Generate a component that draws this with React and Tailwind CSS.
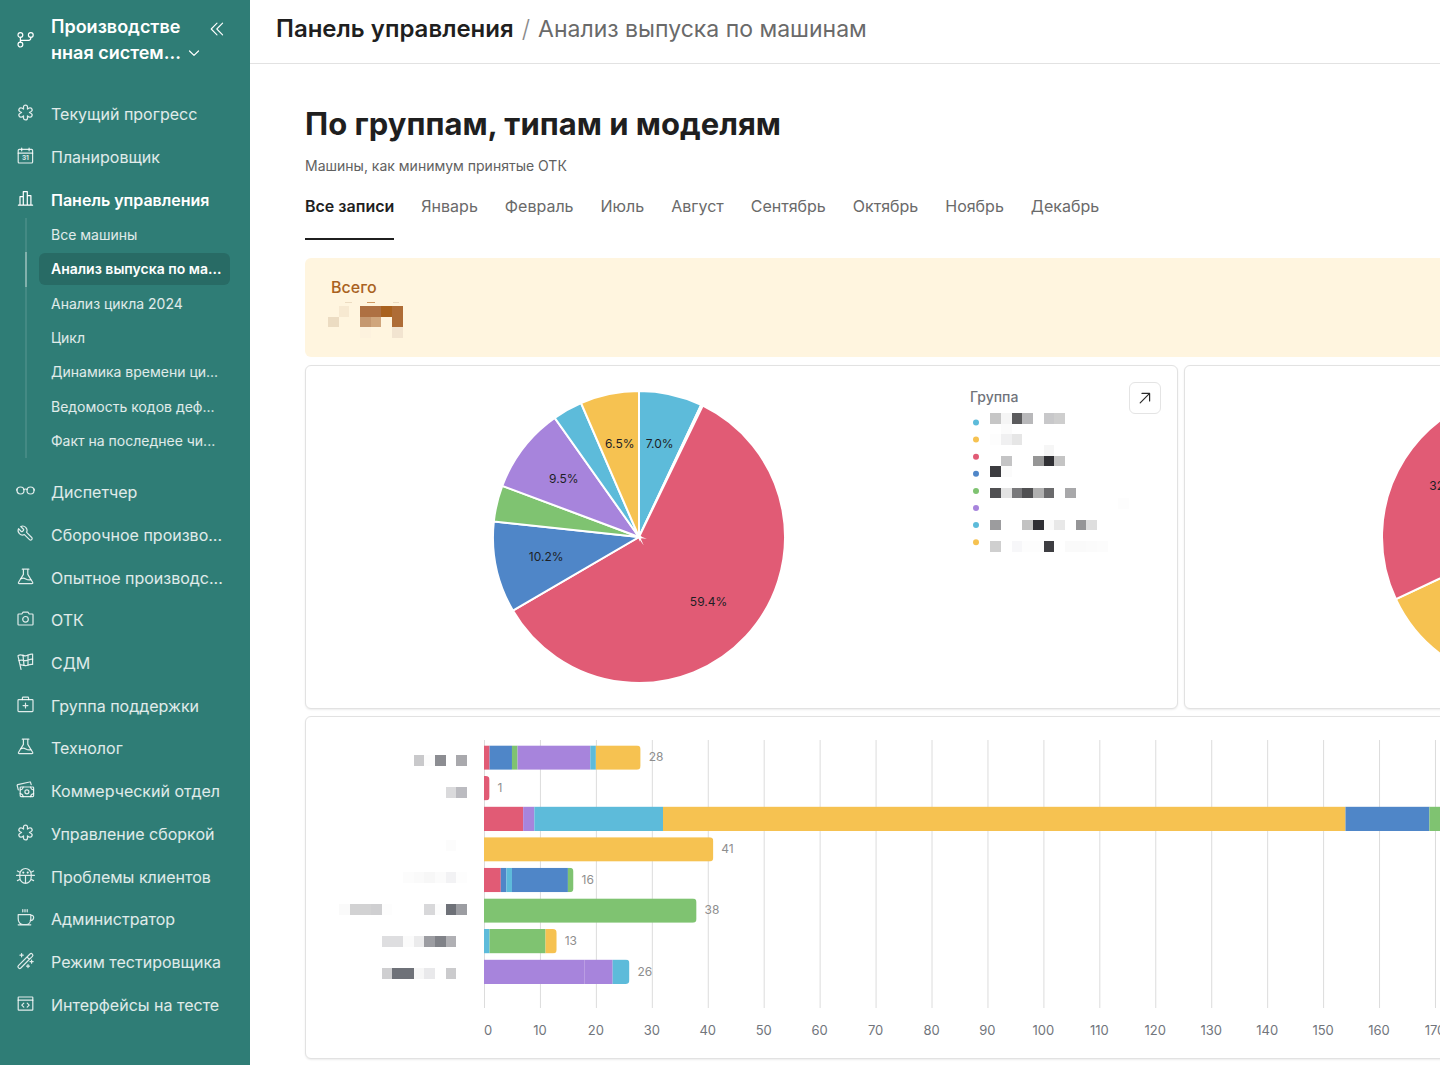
import React, { useState } from 'react';
import clsx from 'clsx';

const COLORS = {
  cyan: '#5dbbda',
  red: '#e15b75',
  blue: '#4f86c8',
  green: '#7fc371',
  purple: '#a784dc',
  yellow: '#f6c251',
};

// outline of a six-armed asterisk around (9.5, 9.5)
const asteriskPath = () => {
  const pt = (along, side, a) => {
    const x = 9.5 + along * Math.cos(a) - side * Math.sin(a);
    const y = 9.5 + along * Math.sin(a) + side * Math.cos(a);
    return `${x.toFixed(2)} ${y.toFixed(2)}`;
  };
  let d = '';
  for (let i = 0; i < 6; i++) {
    const a = -Math.PI / 2 + (i * Math.PI) / 3;
    d += `${i === 0 ? 'M' : 'L'}${pt(3.4, -1.95, a)}L${pt(5.4, -2, a)}A2 2 0 0 1 ${pt(5.4, 2, a)}L${pt(3.4, 1.95, a)}`;
  }
  return d + 'Z';
};

const FLASK = (
  <>
    <path d="M6.3 2.2h6.6M7.4 2.2v5.2L2.6 15.2q-.7 1.4.8 1.4h12.4q1.5 0 .8-1.4L11.8 7.4V2.2" />
    <path d="M5 11.6c2-1 3.4-.5 4.8.3s2.8 1.3 5 .7" />
  </>
);

const ICONS = {
  branch: (
    <>
      <circle cx="4.4" cy="5" r="2.4" />
      <circle cx="14.8" cy="5" r="2.4" />
      <circle cx="4.4" cy="14.6" r="2.4" />
      <path d="M4.4 7.4v4.8M4.4 10.3h8.2q2.2 0 2.2-2.2v-.7" />
    </>
  ),
  asterisk: <path d={asteriskPath()} />,
  calendar: (
    <>
      <rect x="2.2" y="3.4" width="14.4" height="13.6" rx="1" />
      <path d="M2.2 7.2h14.4M5.7 2v2.8M13.1 2v2.8" />
      <text x="9.4" y="14.4" textAnchor="middle" fontSize="6.5" fontWeight="700" fill="currentColor" stroke="none">31</text>
    </>
  ),
  bars: <path d="M2.4 16.2h14.2M4 16.2V7.6h3.3M7.3 16.2V2.6h4v13.6M11.3 6.6h3.6v9.6" />,
  glasses: (
    <>
      <circle cx="4.5" cy="9.5" r="3.5" />
      <circle cx="14.5" cy="9.5" r="3.5" />
      <path d="M7.8 8.6q1.7-1.2 3.4 0M.8 9.2v-1M18.2 9.2v-1" />
    </>
  ),
  wrench: (
    <path
      transform="matrix(-.74 0 0 .74 18.4 .6)"
      strokeWidth="1.6"
      d="M14.7 6.3a1 1 0 0 0 0 1.4l1.6 1.6a1 1 0 0 0 1.4 0l3.77-3.77a6 6 0 0 1-7.94 7.94l-6.91 6.91a2.12 2.12 0 0 1-3-3l6.91-6.91a6 6 0 0 1 7.94-7.94l-3.76 3.76z"
    />
  ),
  flask: FLASK,
  camera: (
    <>
      <path d="M2.8 5h3l1.3-1.9h4.8L13.2 5h3q.8 0 .8.8v9.4q0 .8-.8.8H2.8q-.8 0-.8-.8V5.8q0-.8.8-.8z" />
      <circle cx="9.5" cy="10.3" r="2.8" />
    </>
  ),
  flag: (
    <>
      <path d="M5 17.4 2 3.8c3-2.4 5 .4 7.6 0 2.6-.4 3.8-2 7-1.6v10.2c-2.8-.6-4.4.8-6.8 1.2-2.4.4-4-1.4-5.8-.6" />
      <path d="M3 8.6c2.8-1.6 4.8.4 7 0 2.6-.4 3.8-1.8 6.6-1.4M7 3.2l1 10.2M12 3v10.2" />
    </>
  ),
  aid: (
    <>
      <rect x="2" y="4.6" width="15" height="12" rx=".8" />
      <path d="M6.4 4.6V3q0-.8.8-.8h4.6q.8 0 .8.8v1.6M9.5 8.2v4.8M7.1 10.6h4.8" />
    </>
  ),
  money: (
    <>
      <rect x="4.2" y="7" width="13.4" height="9.6" rx=".8" />
      <circle cx="10.9" cy="11.8" r="2" />
      <path d="M4.2 10q2.6-.4 3-3M17.6 10q-2.6-.4-3-3M4.2 13.6q2.6.4 3 3M17.6 13.6q-2.6.4-3 3M2.3 9.8 1.2 5.6q-.2-.8.6-1L13.6 2q.8-.2 1 .6l.6 2" />
    </>
  ),
  bug: (
    <>
      <path d="M3.8 8.4a5.7 5.9 0 0 1 11.4 0v3.2a5.7 5.7 0 0 1-11.4 0zM.6 9.4h17.8M9.5 9.4v7.8M3.9 6.2 1.4 5M15.1 6.2l2.5-1.2M4.2 13.2l-2.8 1.4M14.8 13.2l2.8 1.4" />
      <circle cx="7.3" cy="6.6" r=".5" fill="currentColor" />
      <circle cx="11.7" cy="6.6" r=".5" fill="currentColor" />
    </>
  ),
  coffee: <path d="M2.2 6.6h12.6v4.2c0 3.4-2 5.8-4.6 5.8H6.8c-2.6 0-4.6-2.4-4.6-5.8zM14.8 7.2c4-.2 3.8 5.2-.6 5.4M2.2 16.8h12.6M6.8 1.6v2.2M9 1.6v2.2M11.2 1.6v2.2" />,
  wand: (
    <>
      <path d="M2.4 14.6 14 3a1.7 1.7 0 0 1 2.4 2.4L4.8 17a1.7 1.7 0 0 1-2.4-2.4zM11 6l2.4 2.4" />
      <path d="M5.6 2.6v3.2M4 4.2h3.2M15.6 9v3.2M14 10.6h3.2M12 13.6v3M10.5 15.1h3" />
    </>
  ),
  code: (
    <>
      <rect x="2.2" y="3" width="14.6" height="13.2" rx=".6" />
      <path d="M2.2 6.2h14.6M7.8 9.2l-2 2 2 2M11.2 9.2l2 2-2 2" />
    </>
  ),
};

function Icon({ name, className }) {
  return (
    <svg viewBox="0 0 19 19" fill="none" stroke="currentColor" strokeWidth="1.2" strokeLinecap="round" strokeLinejoin="round" className={clsx('size-[19px] shrink-0', className)} aria-hidden="true">
      {ICONS[name]}
    </svg>
  );
}

const MAIN_NAV = [
  { label: 'Текущий прогресс', icon: 'asterisk' },
  { label: 'Планировщик', icon: 'calendar' },
  { label: 'Панель управления', icon: 'bars', active: true },
];

const SUB_NAV = ['Все машины', 'Анализ выпуска по ма...', 'Анализ цикла 2024', 'Цикл', 'Динамика времени ци...', 'Ведомость кодов деф...', 'Факт на последнее чи...'];

const SECTION_NAV = [
  { label: 'Диспетчер', icon: 'glasses' },
  { label: 'Сборочное произво...', icon: 'wrench' },
  { label: 'Опытное производс...', icon: 'flask' },
  { label: 'ОТК', icon: 'camera' },
  { label: 'СДМ', icon: 'flag' },
  { label: 'Группа поддержки', icon: 'aid' },
  { label: 'Технолог', icon: 'flask' },
  { label: 'Коммерческий отдел', icon: 'money' },
  { label: 'Управление сборкой', icon: 'asterisk' },
  { label: 'Проблемы клиентов', icon: 'bug' },
  { label: 'Администратор', icon: 'coffee' },
  { label: 'Режим тестировщика', icon: 'wand' },
  { label: 'Интерфейсы на тесте', icon: 'code' },
];

const TABS = ['Все записи', 'Январь', 'Февраль', 'Июль', 'Август', 'Сентябрь', 'Октябрь', 'Ноябрь', 'Декабрь'];

// hidden values: [column, row, color]
const CELL = 32 / 3;

const TOTAL_CELLS = [
  [1, 0, '#f7e9d1'], [3, 0, '#ae7042'], [4, 0, '#ae7042'], [5, 0, '#a9621f'], [6, 0, '#ae6c36'],
  [0, 1, '#ecdcc2'], [3, 1, '#c59870'], [4, 1, '#d0a67c'], [6, 1, '#ae6c36'],
  [3, 2, '#fdf2de'], [6, 2, '#f2e4d0'],
];

const LEGEND_CELLS = [
  [0, 0, '#c6c6c6'], [1, 0, '#f5f5f5'], [2, 0, '#5b5b5d'], [3, 0, '#b8b8ba'], [5, 0, '#c8c8ca'], [6, 0, '#cecece'],
  [1, 1, '#fbfbfb'],
  [0, 2, '#fdfdfd'], [1, 2, '#f0f0f1'], [2, 2, '#e6e6e6'],
  [5, 3, '#f6f6f6'],
  [1, 4, '#c4c4c5'], [4, 4, '#969696'], [5, 4, '#303034'], [6, 4, '#c4c4c4'],
  [0, 5, '#3c3c40'], [1, 5, '#fbfbfb'],
  [0, 7, '#505052'], [1, 7, '#e3e3e3'], [2, 7, '#79797b'], [3, 7, '#505052'], [4, 7, '#b0b0b0'], [5, 7, '#6a6a6c'], [7, 7, '#a8a8aa'],
  [12, 8, '#fdfdfd'],
  [0, 10, '#9c9c9e'], [3, 10, '#c2c2c2'], [4, 10, '#2e2e33'], [5, 10, '#fafafa'], [6, 10, '#e8e8e8'], [8, 10, '#959597'], [9, 10, '#dedede'],
  [0, 12, '#cfcfcf'], [2, 12, '#f7f7f9'], [3, 12, '#fdfdfd'], [4, 12, '#fdfdfd'], [5, 12, '#3e3e42'],
  [7, 12, '#fafafa'], [8, 12, '#fafafa'], [9, 12, '#fbfbfb'], [10, 12, '#fcfcfc'],
];

const BAR_LABEL_CELLS = [
  [7, 0, '#c9c9cb'], [8, 0, '#fcfcfc'], [9, 0, '#8c8d92'], [11, 0, '#a9a9ad'],
  [10, 3, '#dadadc'], [11, 3, '#bbbbc0'],
  [10, 8, '#fcfcfc'],
  [6, 11, '#fcfcfc'], [7, 11, '#fafafa'], [8, 11, '#f7f7f7'], [9, 11, '#fbfbfb'], [10, 11, '#f2f2f4'], [11, 11, '#fdfdfd'],
  [0, 14, '#fafafa'], [1, 14, '#d2d2d3'], [2, 14, '#d2d2d3'], [3, 14, '#cfcfd1'], [4, 14, '#fdfdfd'], [8, 14, '#d8d8da'], [9, 14, '#fcfcfc'], [10, 14, '#6e7178'], [11, 14, '#9c9da2'],
  [4, 17, '#dedee0'], [5, 17, '#dedee0'], [6, 17, '#fbfbfb'], [7, 17, '#ebebec'], [8, 17, '#9c9da2'], [9, 17, '#808288'], [10, 17, '#b0b0b4'],
  [4, 20, '#cfcfd1'], [5, 20, '#6e7178'], [6, 20, '#6e7178'], [7, 20, '#f7f7f7'], [8, 20, '#e9e9eb'], [10, 20, '#cbcbcd'],
];

function Cells({ cells, x = 0, y = 0 }) {
  return cells.map(([c, r, fill]) => (
    <rect key={`${c}-${r}`} x={x + c * CELL} y={y + r * CELL} width={CELL} height={CELL} fill={fill} shapeRendering="crispEdges" />
  ));
}

const R = 146;

// share is a percentage, slices run clockwise from the top
const GROUP_SLICES = [
  { share: 7.0, color: COLORS.cyan, label: '7.0%' },
  { share: 0.2, color: '#fff' },
  { share: 59.4, color: COLORS.red, label: '59.4%' },
  { share: 10.1, color: COLORS.blue, label: '10.2%' },
  { share: 4.0, color: COLORS.green },
  { share: 9.5, color: COLORS.purple, label: '9.5%' },
  { share: 3.3, color: COLORS.cyan },
  { share: 6.5, color: COLORS.yellow, label: '6.5%' },
];

const TYPE_SLICES = [
  { share: 26, color: COLORS.blue },
  { share: 42, color: COLORS.yellow },
  { share: 32, color: COLORS.red, label: '32.0%' },
];

function Pie({ slices }) {
  let start = 0;
  const parts = slices.map((s) => {
    const a0 = (start / 100) * Math.PI * 2;
    start += s.share;
    const a1 = (start / 100) * Math.PI * 2;
    const mid = (a0 + a1) / 2;
    const large = s.share > 50 ? 1 : 0;
    return {
      ...s,
      d: `M0 0L${R * Math.sin(a0)} ${-R * Math.cos(a0)}A${R} ${R} 0 ${large} 1 ${R * Math.sin(a1)} ${-R * Math.cos(a1)}Z`,
      tx: R * 0.65 * Math.sin(mid),
      ty: -R * 0.65 * Math.cos(mid),
    };
  });
  return (
    <svg viewBox="-148 -148 296 296" className="size-[296px] shrink-0">
      {parts.map((p, i) => (
        <path key={i} d={p.d} fill={p.color} stroke="#fff" strokeWidth="2" strokeMiterlimit="10" />
      ))}
      {parts.filter((p) => p.label).map((p) => (
        <text key={p.label} x={p.tx} y={p.ty + 4} textAnchor="middle" fontSize="12" fill="#1d1f25">{p.label}</text>
      ))}
    </svg>
  );
}

const BARS = [
  { total: 28, parts: [['red', 1], ['blue', 4], ['green', 1], ['purple', 13], ['cyan', 1], ['yellow', 8]] },
  { total: 1, parts: [['red', 1]] },
  { total: 204, parts: [['red', 7], ['purple', 2], ['cyan', 23], ['yellow', 122], ['blue', 15], ['green', 35]] },
  { total: 41, parts: [['yellow', 41]] },
  { total: 16, parts: [['red', 3], ['blue', 1], ['cyan', 1], ['blue', 10], ['green', 1]] },
  { total: 38, parts: [['green', 38]] },
  { total: 13, parts: [['cyan', 1], ['green', 10], ['yellow', 2]] },
  { total: 26, parts: [['purple', 18], ['purple', 5], ['cyan', 3]] },
];

const UNIT = 5.594;
const X0 = 178;

function BarChart() {
  const ticks = Array.from({ length: 22 }, (_, i) => i * 10);
  return (
    <svg className="block h-[341px] w-full" aria-label="Выпуск по моделям">
      {ticks.map((t) => (
        <line key={t} x1={X0 + 0.5 + t * UNIT} x2={X0 + 0.5 + t * UNIT} y1="23" y2="291" stroke="#dcdcdc" />
      ))}
      {BARS.map((bar, row) => {
        const y = 28.4 + row * 30.6;
        const w = bar.total * UNIT;
        let sum = 0;
        return (
          <g key={row}>
            <clipPath id={`bar-${row}`}>
              <path d={`M${X0} ${y}h${w - 4}q4 0 4 4v16.4q0 4-4 4h${4 - w}z`} />
            </clipPath>
            <g clipPath={`url(#bar-${row})`}>
              {bar.parts.map(([color, value], i) => {
                const x = X0 + sum * UNIT;
                sum += value;
                return <rect key={i} x={x} y={y} width={value * UNIT} height="24.4" fill={COLORS[color]} />;
              })}
            </g>
            <text x={X0 + w + 8} y={y + 16} fontSize="12" fill="#8e8e8e">{bar.total}</text>
          </g>
        );
      })}
      {ticks.map((t) => (
        <text key={t} x={t === 0 ? X0 + 4 : X0 + t * UNIT} y="318" textAnchor="middle" fontSize="13" fill="#71757c">{t}</text>
      ))}
      <Cells cells={BAR_LABEL_CELLS} x={33} y={38} />
    </svg>
  );
}

function Sidebar() {
  return (
    <aside className="flex w-[250px] shrink-0 flex-col bg-[#2f7d76] text-white">
      <div className="flex items-start pt-[14px] pl-4">
        <Icon name="branch" className="mt-4" />
        <button type="button" className="ml-4 w-[153px] text-left text-lg leading-[26px] font-semibold">
          Производстве<br />нная систем...
          <svg viewBox="0 0 12 8" fill="none" stroke="currentColor" strokeWidth="1.2" strokeLinecap="round" strokeLinejoin="round" className="ml-[7px] inline-block h-2 w-3" aria-hidden="true">
            <path d="m1.5 1 4.5 4.4L10.5 1" />
          </svg>
        </button>
        <button type="button" aria-label="Свернуть меню" className="mt-2 ml-[6px]">
          <svg viewBox="0 0 14 14" fill="none" stroke="currentColor" strokeWidth="1.1" strokeLinecap="round" strokeLinejoin="round" className="size-[14px]">
            <path d="M7 1.2 1.2 7 7 12.8M12.6 1.2 6.8 7l5.8 5.8" />
          </svg>
        </button>
      </div>

      <nav className="mt-[27px] text-base">
        <ul className="grid h-[128px] auto-rows-fr">
          {MAIN_NAV.map((item) => (
            <li key={item.label} className="flex">
              <a href="#" className={clsx('flex flex-1 items-center gap-4 pl-4', item.active ? 'font-semibold text-white' : 'text-white/85')}>
                <Icon name={item.icon} className="mb-[3px]" />
                {item.label}
              </a>
            </li>
          ))}
        </ul>

        <ul className="-mt-[3px] ml-[25px] grid h-[240px] auto-rows-fr text-sm">
          {SUB_NAV.map((label, i) => (
            <li key={label} className={clsx('flex items-center border-l-2 pr-5 pl-3', i === 1 ? 'border-white/40' : 'border-white/10')}>
              <a href="#" className={clsx('flex h-8 flex-1 items-center rounded-md pl-3 whitespace-nowrap', i === 1 ? 'bg-[#286b65] font-semibold text-white' : 'text-white/85')}>
                {label}
              </a>
            </li>
          ))}
        </ul>

        <ul className="mt-[13px] grid h-[555px] auto-rows-fr">
          {SECTION_NAV.map((item) => (
            <li key={item.label} className="flex">
              <a href="#" className="flex flex-1 items-center gap-4 pl-4 whitespace-nowrap text-white/85">
                <Icon name={item.icon} className="mb-[3px]" />
                {item.label}
              </a>
            </li>
          ))}
        </ul>
      </nav>
    </aside>
  );
}

const LEGEND_DOTS = ['cyan', 'yellow', 'red', 'blue', 'green', 'purple', 'cyan', 'yellow'];

function Legend() {
  return (
    <div className="w-[150px]">
      <p className="text-sm leading-5 font-medium text-[#6f737b]">Группа</p>
      <svg width="150" height="150" className="block overflow-visible">
        {LEGEND_DOTS.map((color, i) => (
          <circle key={i} cx="6" cy={15.5 + i * 17.1} r="3" fill={COLORS[color]} />
        ))}
        <Cells cells={LEGEND_CELLS} x={20.3} y={6} />
      </svg>
    </div>
  );
}

const CARD = 'rounded-md border border-[#e2e2e2] bg-white shadow-[0_1px_2px_rgba(0,0,0,0.08)]';

function App() {
  const [tab, setTab] = useState('Все записи');

  return (
    <div className="flex min-h-screen overflow-hidden bg-white font-['Inter',sans-serif] text-[#1d1f25]">
      <Sidebar />

      <main className="min-w-0 flex-1 overflow-hidden">
        <header className="flex h-16 items-center gap-2 border-b border-[#e2e2e2] pb-[5px] pl-[26px] text-2xl whitespace-nowrap">
          <a href="#" className="font-semibold text-[#1f1f1f]">Панель управления</a>
          <span className="font-light text-[#8a8a8a]">/</span>
          <span className="text-[23px] text-[#6a6a6a]">Анализ выпуска по машинам</span>
        </header>

        <div className="w-max pt-[38px] pl-[55px]">
          <h1 className="text-[31px] leading-[44px] font-bold text-[#1f1f1f]">По группам, типам и моделям</h1>
          <p className="mt-[10px] text-sm leading-5 text-[#616161]">Машины, как минимум принятые ОТК</p>

          <div role="tablist" className="mt-[18px] flex gap-[27px] text-base">
            {TABS.map((name) => (
              <button
                key={name}
                type="button"
                role="tab"
                aria-selected={tab === name}
                onClick={() => setTab(name)}
                className={clsx('h-[46px] border-b-2 pb-5', tab === name ? 'border-[#1f1f1f] font-semibold text-[#1f1f1f]' : 'border-transparent text-[#6a6a6a]')}
              >
                {name}
              </button>
            ))}
          </div>

          <section className="mt-[18px] h-[99px] rounded-md bg-[#fff5df] pt-[17px] pl-[23px]">
            <h2 className="mb-px pl-[3px] text-base leading-6 font-medium text-[#a9621f]">Всего</h2>
            <svg width="80" height="40" className="block overflow-visible" aria-hidden="true">
              <path d="M17 2.5h7M65 2.5h6" stroke="#ecdcc2" />
              <path d="M39 2.5h8" stroke="#d09a64" />
              <Cells cells={TOTAL_CELLS} y={6} />
            </svg>
          </section>

          <div className="mt-2 grid grid-cols-[873px_873px] gap-x-[6px] gap-y-[7px]">
            <section className={clsx(CARD, 'flex h-[344px] items-start pl-[185px]')}>
              <div className="pt-[23px]">
                <Pie slices={GROUP_SLICES} />
              </div>
              <div className="ml-[183px] pt-[21px]">
                <Legend />
              </div>
              <button type="button" aria-label="Развернуть" className="mt-4 ml-[9px] flex size-8 items-center justify-center rounded-md border border-[#e4e4e4]">
                <svg viewBox="0 0 12 12" fill="none" stroke="#2b2b2b" strokeWidth="1.2" strokeLinecap="round" strokeLinejoin="round" className="size-3">
                  <path d="M1.2 10.8 10.6 1.4M3 1.4h7.6V9" />
                </svg>
              </button>
            </section>
            <section className={clsx(CARD, 'h-[344px] pt-[23px] pl-[195px]')}>
              <Pie slices={TYPE_SLICES} />
            </section>
            <section className={clsx(CARD, 'col-span-2')}>
              <BarChart />
            </section>
          </div>
        </div>
      </main>
    </div>
  );
}

export default App;
